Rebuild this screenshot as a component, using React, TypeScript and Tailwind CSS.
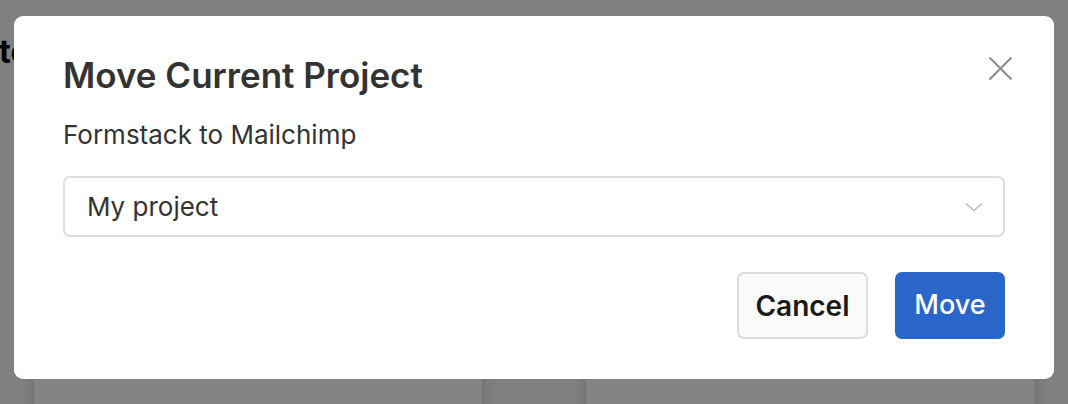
import React from 'react'

/**
 * Move project dialog shown over a dimmed projects page
 */
export default function App() {
  return (
    <div
      className="relative w-[1068px] h-[404px] overflow-hidden bg-[#808080]"
      style={{ fontFamily: 'Inter, "Noto Sans", sans-serif' }}
    >
      {/* Dimmed page behind */}
      <div className="flex flex-col pt-[32px]">
        <h1 className="-ml-[1px] text-[32px] font-bold leading-[40px] text-black">to</h1>
        <div className="mt-[266px] flex gap-[104px] pl-[34px]">
          <div className="h-[200px] w-[448px] bg-[#838383] shadow-[0_0_12px_rgba(0,0,0,0.18)]" />
          <div className="h-[200px] w-[449px] bg-[#838383] shadow-[0_0_12px_rgba(0,0,0,0.18)]" />
        </div>
      </div>

      {/* Dialog */}
      <div className="absolute left-[14px] top-[16px] w-[1040px] h-[363px] rounded-[9px] bg-white px-[49px] pt-[37px] text-[#333]">
        <button className="absolute right-[41px] top-[40px] text-[#8a8a8a]">
          <svg width="25" height="25" viewBox="0 0 25 25" fill="none" stroke="currentColor" strokeWidth="2">
            <path d="M1.5 1.5 L23.5 23.5 M23.5 1.5 L1.5 23.5" />
          </svg>
        </button>

        <h2 className="text-[35px] font-semibold leading-[44px]">Move Current Project</h2>
        <p className="mt-[22px] text-[26px] leading-[32px]">Formstack to Mailchimp</p>

        <div className="mt-[25px] flex h-[61px] items-center justify-between rounded-[7px] border-2 border-[#dedede] pl-[22px] pr-[20px]">
          <span className="text-[26px] leading-[32px] text-[#333]">My project</span>
          <svg width="18" height="10" viewBox="0 0 18 10" fill="none" stroke="#bdbdbd" strokeWidth="1.5">
            <path d="M1 1.5 L9 8.5 L17 1.5" />
          </svg>
        </div>

        <div className="mt-[35px] flex justify-end gap-[27px]">
          <button className="h-[67px] w-[131px] rounded-[7px] border-2 border-[#dcdcdc] bg-[#fafafa] text-[28px] font-semibold text-[#1a1a1a]">
            Cancel
          </button>
          <button className="h-[67px] w-[110px] rounded-[7px] bg-[#2a66c9] text-[27px] font-medium text-white">
            Move
          </button>
        </div>
      </div>
    </div>
  )
}
